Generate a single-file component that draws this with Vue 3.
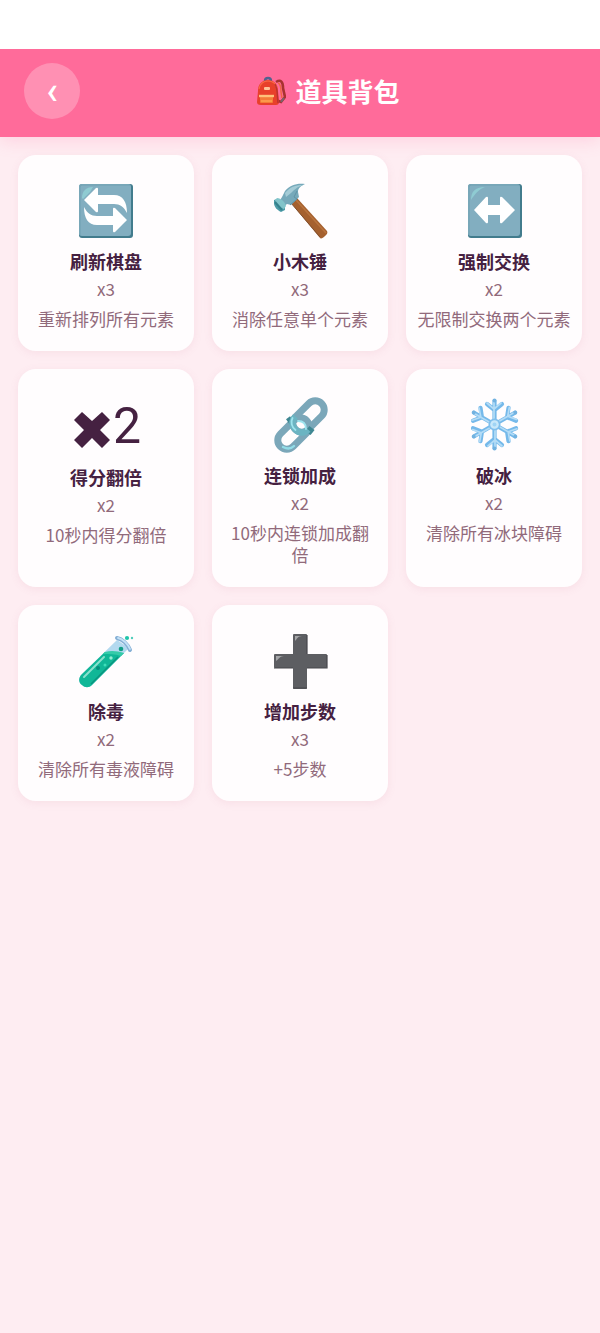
<template>
  <div class="bag-page">
    <div class="status-bar"></div>
    <header class="bag-header">
      <button class="back-button" type="button" aria-label="返回">‹</button>
      <h1 class="bag-title">
        <svg class="bag-icon" viewBox="0 0 30 30" aria-hidden="true">
          <path d="M20 6C25 3 27 6 27 12l2 9-4 5-5-2" fill="none" stroke="#a8322f" stroke-width="2.6" />
          <path d="M22 7c3 1 3 5 3 9l1 6" fill="none" stroke="#ef6544" stroke-width="1.5" />
          <path d="M25 26l3-4" stroke="#79636f" stroke-width="2" />
          <path d="M9 5c0-4 6-4 6 0" fill="none" stroke="#53628f" stroke-width="2.4" />
          <path d="M2 15C2 8 6 4 12 4s10 4 10 11l1 11c0 2-1 3-3 3H5c-3 0-4-1-4-3z" fill="#e8402b" />
          <path d="M3 13C4 8 7 5 12 5s8 3 9 7" fill="none" stroke="#f96b45" stroke-width="1.2" />
          <path d="M19 8c3 5 2 12 3 19" fill="none" stroke="#b93231" stroke-width="1.4" />
          <rect x="8" y="11" width="6" height="3" rx="1" fill="#ffc39a" />
          <rect x="4" y="19" width="13" height="8" rx="1" fill="#f47b38" />
          <path d="M3 20h15" stroke="#ffc17a" stroke-width="2.4" />
          <path d="M5 25h11" stroke="#ffad59" stroke-width="1.2" />
        </svg>
        <span>道具背包</span>
      </h1>
    </header>

    <main class="item-grid">
      <article v-for="item in items" :key="item.icon" class="item-card">
        <div class="item-icon" :class="{ tall: item.icon === 'double' }">
          <svg v-if="item.icon === 'refresh'" viewBox="0 0 56 56" aria-hidden="true">
            <rect x="1" y="1" width="54" height="54" rx="3" fill="#427c8d" />
            <rect x="1" y="1" width="52" height="52" rx="3" fill="#82aec0" />
            <path d="M2 52V4q0-2 2-2h48" fill="none" stroke="#6fa0b1" stroke-width="1" />
            <path d="M4 15C4 8 8 4 15 4l-3 5-7 7z" fill="#8fcbd2" />
            <path :d="refreshArrow" fill="#fff" />
            <path :d="refreshArrow" fill="#fff" transform="rotate(180 27.5 27)" />
          </svg>

          <svg v-else-if="item.icon === 'hammer'" viewBox="0 0 56 56" aria-hidden="true">
            <path d="M19 20l6-5 30 33c1 2 0 3-2 5-2 2-4 3-5 2z" fill="#a5602e" />
            <path d="M24 17l30 33" stroke="#b9733d" stroke-width="1.5" />
            <path d="M19 20l29 34" stroke="#81502f" stroke-width="1" />
            <path d="M10 14l3-6C18 2 25 0 33 1c-4 2-7 4-7 8l1 5-8 8-4-1-4 3-4-5z" fill="#76a9ba" />
            <path d="M13 10C18 4 23 2 31 2c-6 2-9 5-12 8l-5 4z" fill="#a4cbd6" />
            <path d="M25 8l-3 6 3 2-7 6" fill="none" stroke="#6193a5" stroke-width="1" />
            <path d="M2 17l3-1 8 8v3l-4 2c-4-2-7-5-7-9z" fill="#4c9aa6" />
            <path d="M5 15c4 0 8 4 9 8l-2 3c-4-1-8-5-9-9z" fill="#82c4ca" />
            <path d="M3 19l7 8" stroke="#34818c" stroke-width="2" />
          </svg>

          <svg v-else-if="item.icon === 'swap'" viewBox="0 0 56 56" aria-hidden="true">
            <rect x="2" y="1" width="54" height="54" rx="3" fill="#427c8d" />
            <rect x="2" y="1" width="52" height="52" rx="3" fill="#82aec0" />
            <path d="M3 52V4q0-2 2-2h48" fill="none" stroke="#6fa0b1" stroke-width="1" />
            <path d="M5 17C5 9 9 4 19 4 13 6 9 11 5 17z" fill="#8fcbd2" />
            <path d="M8 27L20 14q2-1 2 1v7h12v-7q0-2 2-1l13 13-13 13q-2 1-2-1v-7H22v7q0 2-2 1z" fill="#fff" />
          </svg>

          <svg v-else-if="item.icon === 'double'" class="wide" viewBox="-8 0 72 56" aria-hidden="true">
            <path d="M4 14l10 9 10-9 8 8-10 10 10 10-8 8-10-10-10 10-8-8L6 32-4 22z" fill="#452141" />
            <text class="double-number" x="35" y="45">2</text>
          </svg>

          <svg v-else-if="item.icon === 'link'" viewBox="0 0 56 56" aria-hidden="true">
            <g fill="none" stroke="#7ba7b9" stroke-width="7">
              <rect x="18" y="10.5" width="37" height="18" rx="9" transform="rotate(-45 36.5 19.5)" />
              <rect x="3" y="27.5" width="37" height="18" rx="9" transform="rotate(-45 21.5 36.5)" />
            </g>
            <g fill="none" stroke-width="6.6">
              <path d="M16 25l4-3M36 36l4-5" stroke="#3f8792" />
              <path d="M23.5 19.5c-4 4-4 9 0 13s9 4 12.500 0" stroke="#6bb4c2" />
            </g>
            <path d="M20.500 21c-2 4-1 9 3 12M26 24c5 0 8 3 8 8" fill="none" stroke="#9de4ee" stroke-width="1.8" stroke-linecap="round" />
            <path d="M11 50c4 2 8 2 11-1" fill="none" stroke="#92dce7" stroke-width="2.4" stroke-linecap="round" />
          </svg>

          <svg v-else-if="item.icon === 'ice'" viewBox="0 0 56 56" aria-hidden="true">
            <g v-for="angle in [0, 60, 120, 180, 240, 300]" :key="angle" :transform="`rotate(${angle} 28.5 27.5)`">
              <path d="M28.5 24V4M21 7l7.5 6L36 7" fill="none" stroke="#75b9ea" stroke-width="4.2" stroke-linecap="round" stroke-linejoin="round" />
              <path d="M28 24V5M21 6l7 6 7-6" fill="none" stroke="#b4dcf6" stroke-width="1.7" stroke-linecap="round" stroke-linejoin="round" />
              <circle cx="28.5" cy="3.5" r="2" fill="#72b2e0" />
            </g>
            <circle cx="28.5" cy="27.5" r="6" fill="#80bfec" />
            <circle cx="28.5" cy="27.5" r="4.3" fill="#c8e8fa" />
            <circle cx="28.5" cy="27.5" r="2" fill="#9fd4f5" />
          </svg>

          <svg v-else-if="item.icon === 'tube'" viewBox="0 0 56 56" aria-hidden="true">
            <path d="M39 7L3 42c-3 4-2 8 1 10 3 3 7 3 10 0l37-37z" fill="#b3d9ef" />
            <path d="M27 19L3 42c-3 4-2 8 1 10 3 3 7 3 10 0l32-32z" fill="#10b797" />
            <path d="M27 19c6-2 13-1 19 1l-3 3c-6-2-12-2-18-2z" fill="#35cba9" />
            <path d="M6 44l20-20" stroke="#8ae1ce" stroke-width="2" stroke-linecap="round" />
            <path d="M13 51l27-27" stroke="#0a947f" stroke-width="1.4" />
            <path d="M39 5c5 1 11 6 13 12" fill="none" stroke="#85afd5" stroke-width="4" stroke-linecap="round" />
            <path d="M40 5c5 1 10 6 12 11" fill="none" stroke="#c5e2f7" stroke-width="1.8" stroke-linecap="round" />
            <circle cx="43" cy="16" r="2.3" fill="#129e87" />
            <circle cx="33" cy="25" r="1.7" fill="#92ecd3" />
            <circle cx="27" cy="32" r="1.5" fill="#3eddb9" />
            <circle cx="20" cy="35" r="2" fill="#078c7c" />
            <circle cx="49" cy="5" r="2.1" fill="#20c4ab" />
            <circle cx="54" cy="5" r="1.2" fill="#50cdbb" />
          </svg>

          <svg v-else viewBox="0 0 56 56" aria-hidden="true">
            <path d="M22 1h12q1 0 1 1v19h19q1 0 1 1v12q0 1-1 1H35v20q0 1-1 1H22q-1 0-1-1V35H3q-1 0-1-1V22q0-1 1-1h18V2q0-1 1-1z" fill="#5d5e62" />
            <path d="M21 55h14M35 2v19M2 35h19M35 35h20V22" fill="none" stroke="#46474b" stroke-width="1.2" />
            <path d="M23 8V3h7c-4 0-5 3-7 5zM4 28v-5h8c-4 0-5 3-8 5z" fill="#a4a5a7" />
          </svg>
        </div>
        <h2 class="item-name">{{ item.name }}</h2>
        <p class="item-count">x{{ item.count }}</p>
        <p class="item-desc">{{ item.desc }}</p>
      </article>
    </main>
  </div>
</template>

<script setup>
const refreshArrow = 'M6 17L18 5q2-1 2 1v6h16c9 0 13 7 13 18-3-6-7-9-13-9H20v7q0 2-2 1z'

const items = [
  { icon: 'refresh', name: '刷新棋盘', count: 3, desc: '重新排列所有元素' },
  { icon: 'hammer', name: '小木锤', count: 3, desc: '消除任意单个元素' },
  { icon: 'swap', name: '强制交换', count: 2, desc: '无限制交换两个元素' },
  { icon: 'double', name: '得分翻倍', count: 2, desc: '10秒内得分翻倍' },
  { icon: 'link', name: '连锁加成', count: 2, desc: '10秒内连锁加成翻倍' },
  { icon: 'ice', name: '破冰', count: 2, desc: '清除所有冰块障碍' },
  { icon: 'tube', name: '除毒', count: 2, desc: '清除所有毒液障碍' },
  { icon: 'steps', name: '增加步数', count: 3, desc: '+5步数' }
]
</script>

<style>
body {
  margin: 0;
  background: #feedf2;
}
</style>

<style scoped>
.bag-page {
  min-height: 100vh;
  background: #feedf2;
  color: #452141;
  font-family: "Noto Sans CJK SC", sans-serif;
}

.status-bar {
  position: relative;
  z-index: 1;
  height: 49px;
  background: #fff;
}

.bag-header {
  display: flex;
  align-items: center;
  padding: 14px 24px 18px;
  background: #ff6b9a;
  box-shadow: 0 4px 16px rgba(255, 107, 154, 0.2);
}

.back-button {
  display: flex;
  align-items: center;
  justify-content: center;
  width: 56px;
  height: 56px;
  padding: 0;
  border: none;
  border-radius: 50%;
  background: rgba(255, 255, 255, 0.25);
  color: #fff;
  font-family: Roboto, sans-serif;
  font-size: 38px;
  font-weight: 500;
  line-height: 32px;
  cursor: pointer;
}

.bag-title {
  display: flex;
  flex: 1;
  align-items: center;
  justify-content: center;
  gap: 9px;
  margin: 0;
  color: #fff;
  font-size: 26px;
  font-weight: 700;
  line-height: 36px;
}

.bag-icon {
  width: 30px;
  height: 30px;
}

.item-grid {
  display: grid;
  grid-template-columns: repeat(3, 1fr);
  gap: 18px;
  padding: 18px;
}

.item-card {
  padding: 24px 11px 21px;
  border-radius: 18px;
  background: #fffdfe;
  box-shadow: 0 2px 9px rgba(200, 107, 140, 0.1);
  text-align: center;
}

.item-icon {
  display: flex;
  align-items: center;
  justify-content: center;
  height: 64px;
}

.item-icon.tall {
  height: 66px;
}

.item-icon svg {
  width: 56px;
  height: 56px;
}

.item-icon .wide {
  width: 72px;
}

.double-number {
  fill: #452141;
  font-family: Roboto, sans-serif;
  font-size: 50px;
  font-weight: 400;
}

.item-name {
  margin: 5px 0 3px;
  font-size: 18px;
  font-weight: 700;
  line-height: 26px;
}

.item-count,
.item-desc {
  margin: 0;
  color: #916a7b;
  font-size: 17px;
}

.item-count {
  line-height: 24px;
}

.item-desc {
  margin-top: 7px;
  line-height: 22px;
}
</style>
